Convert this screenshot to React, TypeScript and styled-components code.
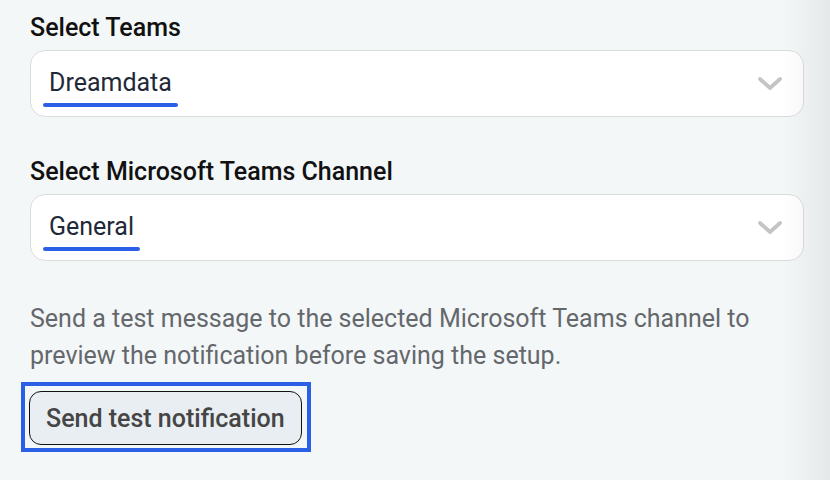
import React from "react";
import styled, { createGlobalStyle } from "styled-components";

const Global = createGlobalStyle`
  html, body { margin: 0; padding: 0; background: #f4f7f8; }
  body { font-family: Roboto, "Liberation Sans", Arial, sans-serif; }
  * { box-sizing: border-box; }
`;

const Page = styled.div`
  position: relative;
  width: 830px;
  height: 480px;
  overflow: hidden;
  padding: 13px 26px 0 30px;
  display: flex;
  flex-direction: column;
  &::after {
    content: "";
    position: absolute;
    top: 0;
    right: 0;
    bottom: 0;
    width: 48px;
    background: linear-gradient(to right, rgba(0, 0, 0, 0), rgba(0, 0, 0, 0.06));
    pointer-events: none;
  }
`;

const Field = styled.div<{ $gap?: number }>`
  display: flex;
  flex-direction: column;
  gap: 7px;
  margin-bottom: ${(p) => p.$gap ?? 0}px;
`;

const Label = styled.label`
  font-size: 25px;
  line-height: 30px;
  font-weight: 500;
  color: #111;
`;

const SelectBox = styled.div`
  height: 67px;
  background: #fff;
  border: 1px solid #dcdcdc;
  border-radius: 15px;
  display: flex;
  align-items: center;
  justify-content: space-between;
  padding: 0 20px 0 12px;
`;

const Value = styled.span`
  position: relative;
  padding: 0 6px;
  font-size: 25px;
  color: #1f2937;
  line-height: 30px;
  margin-top: -2px;
  &::after {
    content: "";
    position: absolute;
    left: 0;
    right: 0;
    bottom: -9px;
    height: 4px;
    border-radius: 2px;
    background: #2b5fe6;
  }
`;

const Chevron = () => (
  <svg width="26" height="16" viewBox="0 0 26 16">
    <polyline
      points="3,3 13,12 23,3"
      fill="none"
      stroke="#c4c4c4"
      strokeWidth="3.8"
      strokeLinecap="round"
      strokeLinejoin="round"
    />
  </svg>
);

const Hint = styled.p`
  margin: 39px 0 0;
  font-size: 25px;
  line-height: 37px;
  color: #64686c;
  max-width: 760px;
`;

const Highlight = styled.div`
  margin-top: 8px;
  align-self: flex-start;
  margin-left: -9px;
  padding: 5px 5px 3px 4px;
  border: 4px solid #2b5fe6;
`;

const Button = styled.button`
  display: block;
  height: 54px;
  padding: 0 16px;
  background: #e8eef1;
  border: 1px solid #111;
  border-radius: 12px;
  font-family: inherit;
  font-size: 25px;
  font-weight: 500;
  color: #454545;
`;

export default function App() {
  return (
    <>
      <Global />
      <Page>
        <Field $gap={40}>
          <Label>Select Teams</Label>
          <SelectBox>
            <Value>Dreamdata</Value>
            <Chevron />
          </SelectBox>
        </Field>
        <Field>
          <Label>Select Microsoft Teams Channel</Label>
          <SelectBox>
            <Value>General</Value>
            <Chevron />
          </SelectBox>
        </Field>
        <Hint>
          Send a test message to the selected Microsoft Teams channel to preview the notification
          before saving the setup.
        </Hint>
        <Highlight>
          <Button>Send test notification</Button>
        </Highlight>
      </Page>
    </>
  );
}
